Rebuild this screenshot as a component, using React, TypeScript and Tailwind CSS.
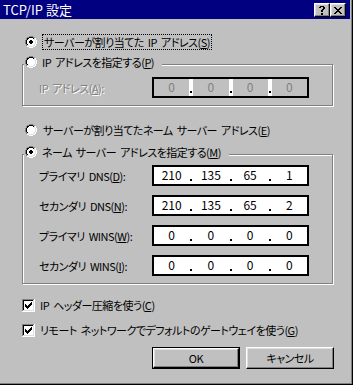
import React from "react";

// tiny pixel-art helper for the classic win95 glyphs
const PAL: Record<string, string> = {
  g: "#808080",
  k: "#000000",
  w: "#ffffff",
  l: "#dfdfdf",
  o: "#ffffff",
  d: "#000000",
};

function Pix(props: { rows: string[]; className?: string }) {
  const h = props.rows.length;
  const w = props.rows[0].length;
  const rects: React.ReactNode[] = [];
  props.rows.forEach((row, y) =>
    row.split("").forEach((c, x) => {
      if (PAL[c]) rects.push(<rect key={x + "-" + y} x={x} y={y} width={1} height={1} fill={PAL[c]} />);
    })
  );
  return (
    <svg width={w} height={h} viewBox={`0 0 ${w} ${h}`} shapeRendering="crispEdges" className={props.className}>
      {rects}
    </svg>
  );
}

const RADIO_ON = [
  "....gggg....",
  "..ggkkkkgg..",
  ".gkkooooklw.",
  ".gkoooooolw.",
  "gkoooddooolw",
  "gkooddddoolw",
  "gkooddddoolw",
  "gkoooddooolw",
  ".gkoooooolw.",
  ".glloooollw.",
  "..wwllllww..",
  "....wwww....",
];
const RADIO_OFF = RADIO_ON.map((r) => r.replace(/d/g, "o"));

const CHECK = [
  "ggggggggggggw",
  "gkkkkkkkkkklw",
  "gkoooooooool w",
  "gkooooooodolw",
  "gkoooooodd olw",
  "gkodoooddd olw",
  "gkoddodddoolw",
  "gkodddddooolw",
  "gkoodddoooolw",
  "gkooodooooolw",
  "gkoooooooo olw",
  "glllllllllllw",
  "wwwwwwwwwwwww",
].map((r) => r.replace(/ /g, ""));

const X_GLYPH = [
  "kk....kk",
  ".kk..kk.",
  "..kkkk..",
  "...kk...",
  "..kkkk..",
  ".kk..kk.",
  "kk....kk",
];
const Q_GLYPH = [
  ".kkkk.",
  "kk..kk",
  "....kk",
  "...kk.",
  "..kk..",
  "..kk..",
  "......",
  "..kk..",
  "..kk..",
];

const raised =
  "border border-t-white border-l-white border-r-black border-b-black shadow-[inset_-1px_-1px_#808080,inset_1px_1px_#dfdfdf]";
const disabledText = "text-[#808080] [text-shadow:1px_1px_0_#fff]";

function CaptionButton(props: { glyph: string[] }) {
  return (
    <div className={`w-[16px] h-[14px] bg-[#c0c0c0] flex items-center justify-center ${raised}`}>
      <Pix rows={props.glyph} />
    </div>
  );
}

function Radio(props: { on?: boolean }) {
  return <Pix rows={props.on ? RADIO_ON : RADIO_OFF} className="shrink-0" />;
}

function IpField(props: { values: string[]; disabled?: boolean }) {
  return (
    <div className="w-[157px] h-[21px] border-2 border-black bg-white flex text-[12px] tracking-normal">
      {props.values.map((v, i) => (
        <React.Fragment key={i}>
          {i > 0 && (
            <div className="w-[4px] flex items-end justify-center pb-[3px]">
              <div className="w-[2px] h-[2px] bg-black"></div>
            </div>
          )}
          <div
            className={`flex-1 flex justify-center leading-[14px] pt-[1px] ${
              props.disabled ? "bg-[#c0c0c0] text-[#808080]" : "text-black"
            }`}
          >
            {v}
          </div>
        </React.Fragment>
      ))}
    </div>
  );
}

function FieldRow(props: { label: React.ReactNode; values: string[]; disabled?: boolean; className?: string }) {
  return (
    <div className={`flex items-center pl-[16px] ${props.className ?? ""}`}>
      <div className={`w-[113px] leading-[16px] ${props.disabled ? disabledText : ""}`}>{props.label}</div>
      <IpField values={props.values} disabled={props.disabled} />
    </div>
  );
}

function GroupBox(props: { legend: React.ReactNode; className?: string; children: React.ReactNode }) {
  return (
    <div
      className={`relative w-[311px] border border-[#808080] shadow-[inset_1px_1px_0_#fff,1px_1px_0_#fff] ${
        props.className ?? ""
      }`}
    >
      <div className="absolute top-[-11px] left-[1px] h-[16px] flex items-center bg-[#c0c0c0] pl-[1px] pr-[8px]">
        {props.legend}
      </div>
      {props.children}
    </div>
  );
}

function Check(props: { label: React.ReactNode; className?: string }) {
  return (
    <div className={`flex items-center h-[16px] ${props.className ?? ""}`}>
      <Pix rows={CHECK} />
      <span className="ml-[5px] leading-[16px]">{props.label}</span>
    </div>
  );
}

export default function App() {
  return (
    <div className="w-[353px] h-[385px] bg-[#c0c0c0] border-r border-b border-black font-['Noto_Sans_CJK_JP',sans-serif] text-[11px] tracking-[-0.5px] [word-spacing:2px] text-black [font-feature-settings:'palt'] overflow-hidden">
      <div className="h-full border-r border-b border-[#808080] pr-[1px] flex flex-col">
        {/* title bar */}
        <div className="h-[19px] bg-[#000080] flex items-start justify-between pl-[3px] pr-[4px]">
          <span className="text-white text-[13px] tracking-normal [word-spacing:0px] leading-[19px] [font-feature-settings:normal]">
            TCP/IP 設定
          </span>
          <div className="flex pt-[3px]">
            <CaptionButton glyph={Q_GLYPH} />
            <CaptionButton glyph={X_GLYPH} />
          </div>
        </div>

        <div className="pl-[22px] flex flex-col">
          <div className="flex items-center h-[16px] mt-[15px] pl-[3px]">
            <Radio on />
            <span className="ml-[5px] px-[1px] border border-dotted border-black leading-[14px]">
              サーバーが割り当てた IP アドレス(<u>S</u>)
            </span>
          </div>

          <GroupBox
            className="mt-[14px] pt-[12px] pb-[7px]"
            legend={
              <>
                <Radio />
                <span className="ml-[5px] leading-[16px]">IP アドレスを指定する(<u>P</u>)</span>
              </>
            }
          >
            <FieldRow
              disabled
              label={
                <>
                  IP アドレス(<u>A</u>):
                </>
              }
              values={["0", "0", "0", "0"]}
            />
          </GroupBox>

          <div className="flex items-center h-[16px] mt-[16px] pl-[3px]">
            <Radio />
            <span className="ml-[6px] leading-[16px]">サーバーが割り当てたネーム サーバー アドレス(<u>E</u>)</span>
          </div>

          <GroupBox
            className="mt-[16px] pt-[10px] pb-[7px] flex flex-col gap-[9px]"
            legend={
              <>
                <Radio on />
                <span className="ml-[5px] leading-[16px]">ネーム サーバー アドレスを指定する(<u>M</u>)</span>
              </>
            }
          >
            <FieldRow
              label={
                <>
                  プライマリ DNS(<u>D</u>):
                </>
              }
              values={["210", "135", "65", "1"]}
            />
            <FieldRow
              label={
                <>
                  セカンダリ DNS(<u>N</u>):
                </>
              }
              values={["210", "135", "65", "2"]}
            />
            <FieldRow
              label={
                <>
                  プライマリ WINS(<u>W</u>):
                </>
              }
              values={["0", "0", "0", "0"]}
            />
            <FieldRow
              label={
                <>
                  セカンダリ WINS(<u>I</u>):
                </>
              }
              values={["0", "0", "0", "0"]}
            />
          </GroupBox>

          <Check
            className="mt-[13px]"
            label={
              <>
                IP ヘッダー圧縮を使う(<u>C</u>)
              </>
            }
          />
          <Check
            className="mt-[9px]"
            label={
              <>
                リモート ネットワークでデフォルトのゲートウェイを使う(<u>G</u>)
              </>
            }
          />

          <div className="flex gap-[6px] mt-[9px] ml-[130px]">
            <div className="w-[88px] h-[22px] border border-black">
              <div className={`h-full flex items-center justify-center ${raised}`}>OK</div>
            </div>
            <div className={`w-[88px] h-[22px] flex items-center justify-center ${raised}`}>キャンセル</div>
          </div>
        </div>
      </div>
    </div>
  );
}
